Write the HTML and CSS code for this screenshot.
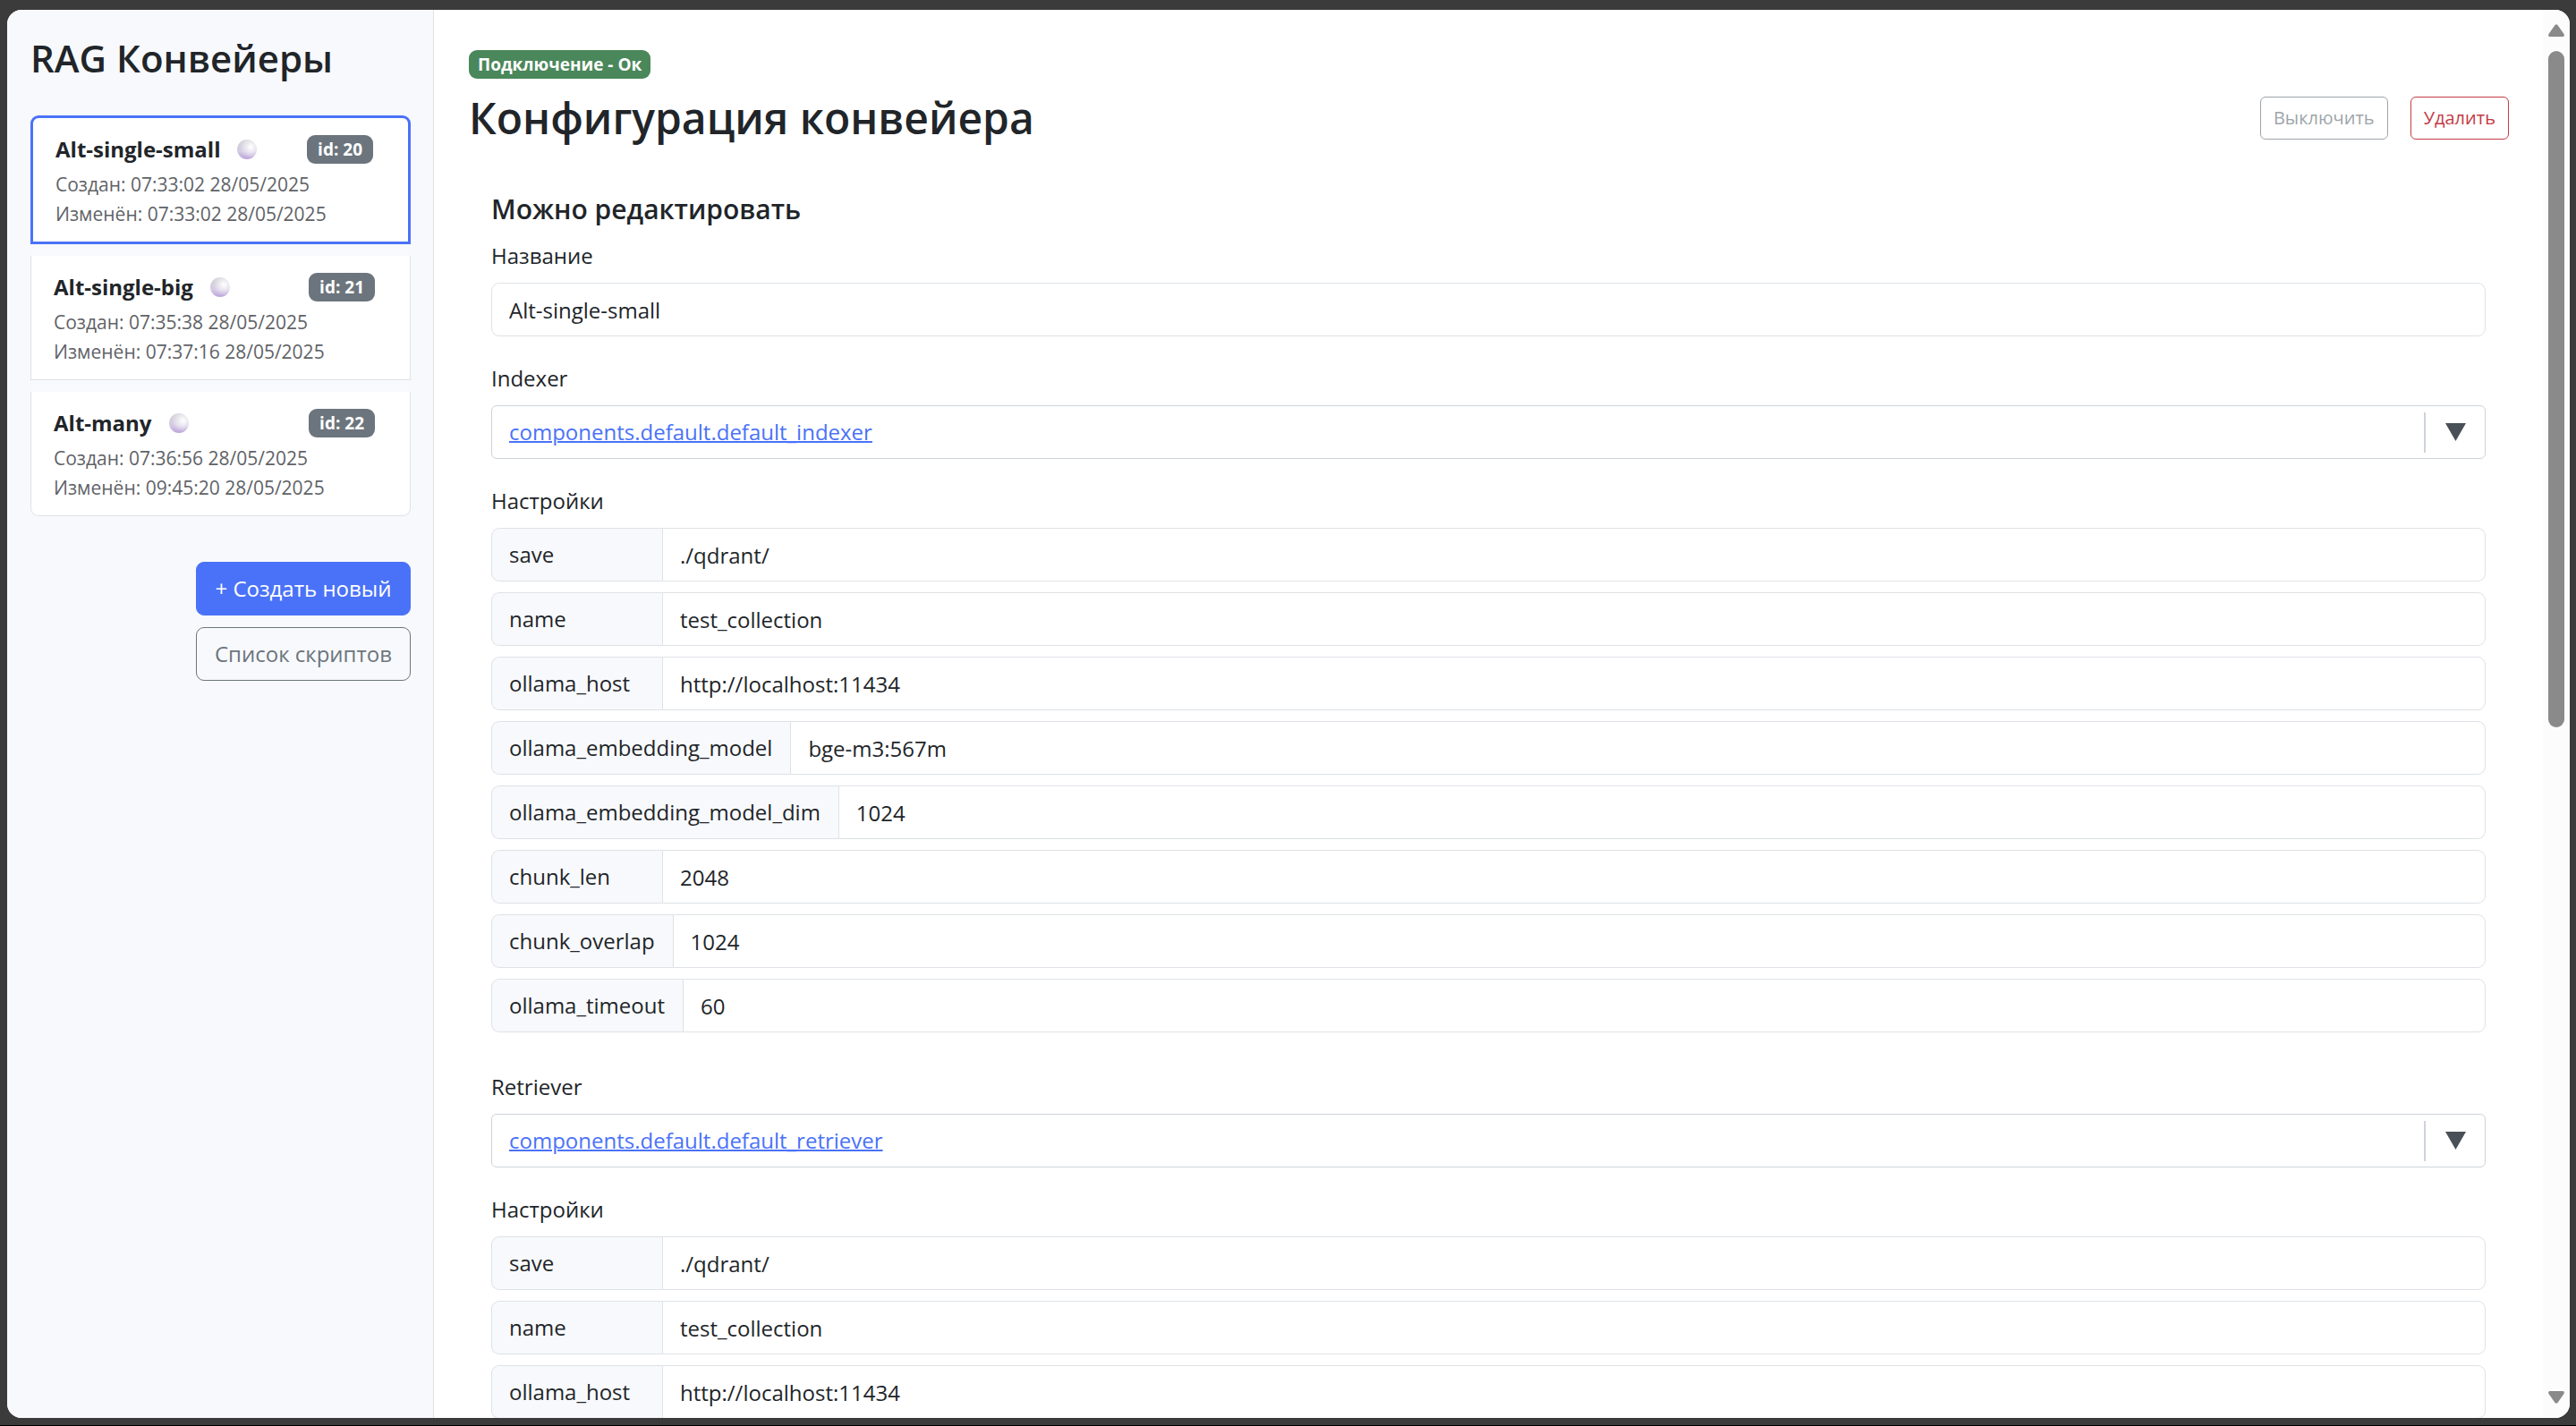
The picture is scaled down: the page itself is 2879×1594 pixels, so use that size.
FILE: index.html
```html
<!DOCTYPE html>
<html lang="ru">
<head>
<meta charset="utf-8">
<title>RAG Конвейеры</title>
<link rel="stylesheet" href="styles.css">
</head>
<body>
<div class="app">
  <aside class="sidebar">
    <h2 class="sidebar-title">RAG Конвейеры</h2>
    <ul class="pipelines">
      <li class="pipeline pipeline-active">
        <div class="pipeline-head"><strong class="pipeline-name">Alt-single-small</strong><span class="orb"></span><span class="badge badge-id">id: 20</span></div>
        <p class="pipeline-date">Создан: 07:33:02 28/05/2025</p>
        <p class="pipeline-date">Изменён: 07:33:02 28/05/2025</p>
      </li>
      <li class="pipeline">
        <div class="pipeline-head"><strong class="pipeline-name">Alt-single-big</strong><span class="orb"></span><span class="badge badge-id">id: 21</span></div>
        <p class="pipeline-date">Создан: 07:35:38 28/05/2025</p>
        <p class="pipeline-date">Изменён: 07:37:16 28/05/2025</p>
      </li>
      <li class="pipeline">
        <div class="pipeline-head"><strong class="pipeline-name">Alt-many</strong><span class="orb"></span><span class="badge badge-id">id: 22</span></div>
        <p class="pipeline-date">Создан: 07:36:56 28/05/2025</p>
        <p class="pipeline-date">Изменён: 09:45:20 28/05/2025</p>
      </li>
    </ul>
    <div class="sidebar-actions">
      <button type="button" class="btn btn-primary">+ Создать новый</button>
      <button type="button" class="btn btn-secondary">Список скриптов</button>
    </div>
  </aside>

  <main class="content">
    <span class="badge badge-ok">Подключение - Ок</span>
    <header class="content-head">
      <h1 class="content-title">Конфигурация конвейера</h1>
      <button type="button" class="btn btn-small btn-secondary" disabled>Выключить</button>
      <button type="button" class="btn btn-small btn-danger">Удалить</button>
    </header>

    <form class="editor">
      <h3 class="editor-title">Можно редактировать</h3>
      <section class="field">
        <label class="label" for="name">Название</label>
        <input class="input input-single" id="name" type="text" value="Alt-single-small">
      </section>

      <section class="field">
        <span class="label">Indexer</span>
        <div class="picker">
          <a class="picker-link" href="#indexer">components.default.default_indexer</a>
          <button type="button" class="picker-toggle" aria-label="Выбрать Indexer"><svg class="picker-arrow" viewBox="0 0 23 20"><path d="M0 0h23L11.500 20z"/></svg></button>
        </div>
      </section>

      <section class="field field-settings">
        <span class="label">Настройки</span>
        <div class="settings">
          <div class="group"><label class="group-key" for="i-save">save</label><input class="input" id="i-save" type="text" value="./qdrant/"></div>
          <div class="group"><label class="group-key" for="i-name">name</label><input class="input" id="i-name" type="text" value="test_collection"></div>
          <div class="group"><label class="group-key" for="i-host">ollama_host</label><input class="input" id="i-host" type="text" value="http://localhost:11434"></div>
          <div class="group"><label class="group-key" for="i-model">ollama_embedding_model</label><input class="input" id="i-model" type="text" value="bge-m3:567m"></div>
          <div class="group"><label class="group-key" for="i-dim">ollama_embedding_model_dim</label><input class="input" id="i-dim" type="text" value="1024"></div>
          <div class="group"><label class="group-key" for="i-len">chunk_len</label><input class="input" id="i-len" type="text" value="2048"></div>
          <div class="group"><label class="group-key" for="i-overlap">chunk_overlap</label><input class="input" id="i-overlap" type="text" value="1024"></div>
          <div class="group"><label class="group-key" for="i-timeout">ollama_timeout</label><input class="input" id="i-timeout" type="text" value="60"></div>
        </div>
      </section>

      <section class="field">
        <span class="label">Retriever</span>
        <div class="picker">
          <a class="picker-link" href="#retriever">components.default.default_retriever</a>
          <button type="button" class="picker-toggle" aria-label="Выбрать Retriever"><svg class="picker-arrow" viewBox="0 0 23 20"><path d="M0 0h23L11.500 20z"/></svg></button>
        </div>
      </section>

      <section class="field field-settings">
        <span class="label">Настройки</span>
        <div class="settings">
          <div class="group"><label class="group-key" for="r-save">save</label><input class="input" id="r-save" type="text" value="./qdrant/"></div>
          <div class="group"><label class="group-key" for="r-name">name</label><input class="input" id="r-name" type="text" value="test_collection"></div>
          <div class="group"><label class="group-key" for="r-host">ollama_host</label><input class="input" id="r-host" type="text" value="http://localhost:11434"></div>
        </div>
      </section>
    </form>
  </main>

  <div class="scrollbar" aria-hidden="true">
    <svg class="scroll-arrow" viewBox="0 0 18 14"><path d="M7.500 1q1.500-1.600 3 0l7 10q1 2.500-1 3h-15q-2-.500-1-3z"/></svg>
    <div class="scroll-track"><div class="scroll-thumb"></div></div>
    <svg class="scroll-arrow" viewBox="0 0 18 14"><path d="M7.500 13q1.500 1.600 3 0l7-10q1-2.500-1-3h-15q-2 .500-1 3z"/></svg>
  </div>
</div>
</body>
</html>
```
FILE: styles.css
```css
* { box-sizing: border-box; }

html { background: #3b3b3b; }

body {
  margin: 0;
  height: 100vh;
  padding: 11px 7px 8px 8px;
  border-bottom: 1px solid #000;
  overflow: hidden;
  font-family: "Open Sans", "Noto Sans", sans-serif;
  font-size: 24px;
  line-height: 36px;
  color: #212529;
}

h1, h2, h3, p, ul { margin: 0; padding: 0; font-weight: 600; }

button, input { font: inherit; color: inherit; }

.app {
  display: flex;
  height: 100%;
  border-radius: 16px;
  overflow: hidden;
  background: #fff;
}

/* Sidebar */
.sidebar {
  flex: none;
  width: 477px;
  padding: 26px 25px 26px 26px;
  background: #f8f9fc;
  border-right: 1px solid #dee2e6;
}

.sidebar-title { font-size: 42px; line-height: 56px; margin-bottom: 36px; }

.pipelines {
  display: flex;
  flex-direction: column;
  gap: 13px;
  list-style: none;
}

.pipeline {
  padding: 17px 39px 14px 25px;
  background: #fff;
  border: 1px solid #dee2e6;
  border-top: 0;
}

.pipeline:last-child { border-radius: 0 0 9px 9px; }

.pipeline-active {
  border: 3px solid #4a72f8;
  border-radius: 9px 9px 0 0;
}

.pipeline-head { display: flex; align-items: center; margin-bottom: 5px; }

.pipeline-name { font-weight: 700; }

.pipeline-date {
  font-size: 21px;
  line-height: 33px;
  font-weight: 400;
  color: #5f6367;
}

.orb {
  width: 22px;
  height: 22px;
  margin-left: 19px;
  border-radius: 50%;
  background:
    radial-gradient(circle at 70% 38%, #fff 0, rgba(255, 255, 255, 0) 60%),
    linear-gradient(#d3d1da 20%, #d5cbe4 60%, #bda6dc);
}

.badge {
  display: inline-block;
  border-radius: 9px;
  font-size: 19px;
  line-height: 32px;
  font-weight: 700;
  color: #fff;
}

.badge-id { margin-left: auto; padding: 0 12px; background: #6c757d; }

.badge-ok { align-self: flex-start; flex: none; padding: 0 10px; background: #4a875b; }

.sidebar-actions {
  display: grid;
  justify-content: end;
  gap: 13px;
  margin-top: 51px;
}

.btn {
  padding: 11px 20px;
  border: 1px solid;
  border-radius: 9px;
  background: transparent;
}

.btn-primary { background: #4a72f8; border-color: #4a72f8; color: #fff; }
.btn-secondary { color: #6c757d; }
.btn-danger { color: #c43b46; }
.btn:disabled { opacity: 0.65; }

.btn-small {
  padding: 6px 14px;
  border-radius: 6px;
  font-size: 20px;
  line-height: 34px;
}

/* Main column */
.content {
  flex: 1;
  min-width: 0;
  padding: 45px 38px 0 39px;
  overflow: hidden;
  display: flex;
  flex-direction: column;
  align-items: stretch;
}

.content-head {
  display: flex;
  align-items: center;
  gap: 25px;
  margin-top: 12px;
}

.content-title { flex: 1; font-size: 48px; line-height: 64px; }

.editor { padding: 51px 26px 0 25px; }

.editor-title { font-size: 30px; line-height: 38px; margin-bottom: 15px; }

.field { margin-bottom: 29px; }
.field-settings { margin-bottom: 43px; }

.label { display: block; margin-bottom: 12px; }

.input {
  flex: 1;
  min-width: 0;
  height: 60px;
  padding: 0 19px;
  border: 1px solid #dee2e6;
  border-radius: 0 9px 9px 0;
  background: #fff;
}

.input-single { display: block; width: 100%; border-radius: 9px; }

.picker {
  display: flex;
  align-items: center;
  height: 60px;
  padding-left: 19px;
  border: 1px solid #ced4da;
  border-radius: 6px;
}

.picker-link {
  flex: 1;
  color: #4a72f8;
  text-decoration-thickness: 2px;
}

.picker-toggle {
  display: flex;
  align-items: center;
  justify-content: center;
  width: 68px;
  height: 45px;
  padding: 0;
  border: 0;
  border-left: 2px solid #ced4da;
  background: transparent;
}

.picker-arrow { width: 23px; height: 20px; fill: #495057; }

.settings { display: flex; flex-direction: column; gap: 12px; }

.group { display: flex; }

.group-key {
  min-width: 191px;
  padding: 11px 20px 11px 19px;
  border: 1px solid #dee2e6;
  border-right: 0;
  border-radius: 9px 0 0 9px;
  background: #f8f9fc;
}

/* Scroll rail */
.scrollbar {
  flex: none;
  display: flex;
  flex-direction: column;
  width: 30px;
  padding: 16px 6px;
  gap: 16px;
  background: #fcfcfc;
}

.scroll-arrow { display: block; width: 18px; height: 14px; fill: #8a8a8a; }

.scroll-track { flex: 1; }

.scroll-thumb { height: 51%; border-radius: 9px; background: #8a8a8a; }
```
